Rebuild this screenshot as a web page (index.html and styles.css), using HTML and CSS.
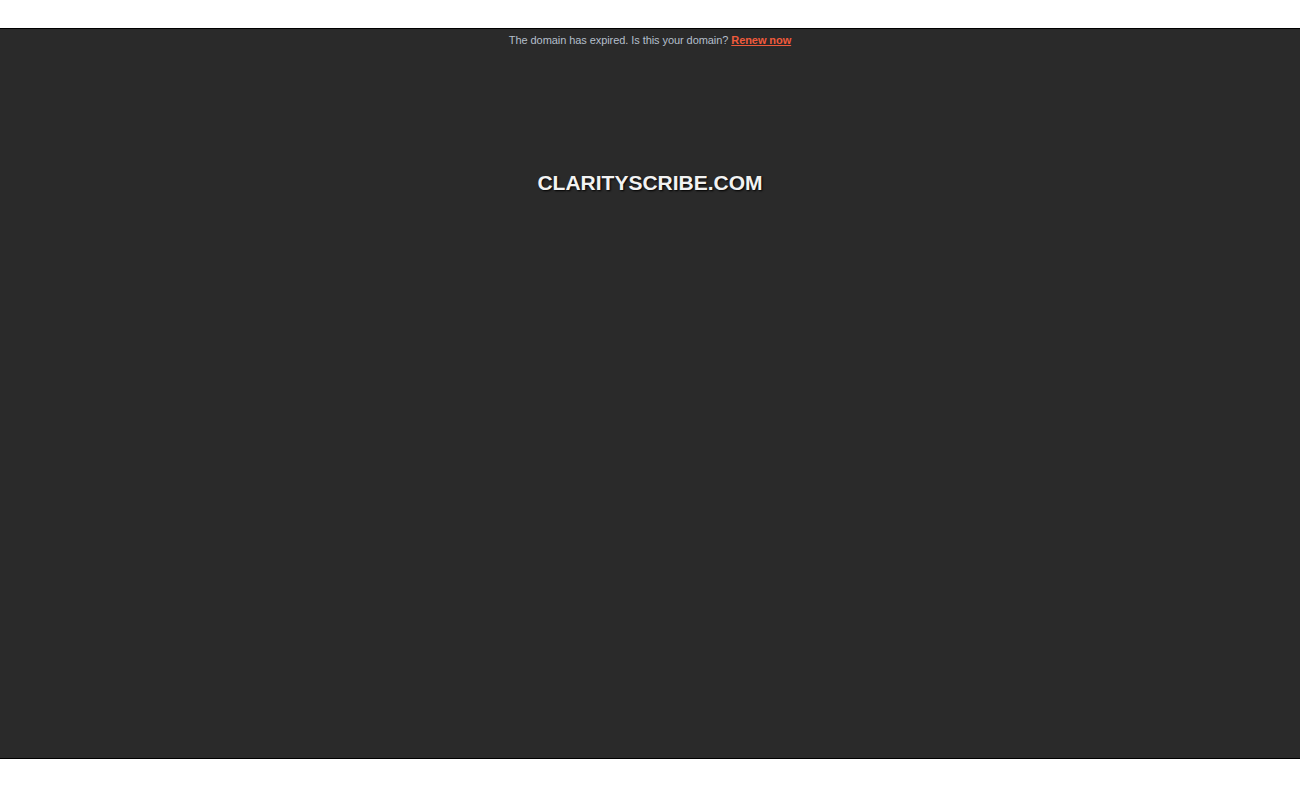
FILE: index.html
```html
<!DOCTYPE html>
<html lang="en">
<head>
<meta charset="utf-8">
<title>clarityscribe.com</title>
<link rel="stylesheet" href="styles.css">
</head>
<body>
<div class="frame">
  <p class="notice">The domain has expired. Is this your domain? <a href="#" class="renew">Renew now</a></p>
  <h1 class="title">CLARITYSCRIBE.COM</h1>
</div>
</body>
</html>
```
FILE: styles.css
```css
html, body {
  margin: 0;
  padding: 0;
  background: #ffffff;
  font-family: "Liberation Sans", Arial, sans-serif;
}
body {
  padding-top: 28px;
}
.frame {
  background: #2a2a2a;
  border-top: 1px solid #000000;
  border-bottom: 1px solid #000000;
  height: 729px;
  text-align: center;
  box-sizing: content-box;
}
.notice {
  margin: 0;
  padding-top: 5px;
  font-size: 11px;
  line-height: 13px;
  letter-spacing: -0.07px;
  color: #b4bfca;
}
.renew {
  color: #f05a3c;
  font-weight: bold;
  text-decoration: underline;
}
.title {
  margin: 124px 0 0 0;
  font-size: 21px;
  line-height: 24px;
  font-weight: bold;
  color: #f2f2f2;
  text-shadow: 1px 1px 2px #000000;
}
```
